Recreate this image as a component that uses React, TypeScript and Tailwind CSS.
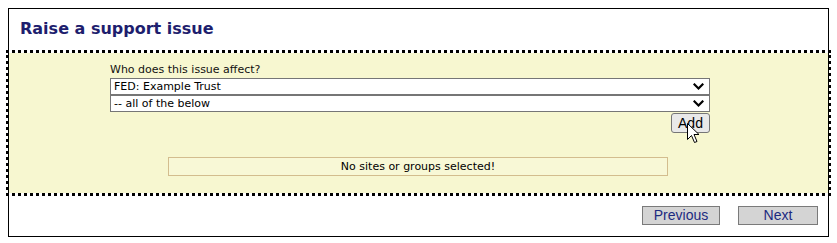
import React from "react";

function Chevron() {
  return (
    <svg width="11" height="8" viewBox="0 0 11 8" className="shrink-0">
      <path d="M1.5 1.5 L5.5 5.5 L9.5 1.5" fill="none" stroke="#000" strokeWidth="2.2" strokeLinecap="square" />
    </svg>
  );
}

function FakeSelect({ text }: { text: string }) {
  return (
    <div
      className="flex h-[17px] w-[600px] items-center justify-between border border-[#767676] bg-white pl-[3px] pr-[5px] leading-none text-black"
      style={{ fontFamily: "'DejaVu Sans', Verdana, sans-serif" }}
    >
      <span className="text-[11px]">{text}</span>
      <Chevron />
    </div>
  );
}

export default function App() {
  return (
    <div className="bg-white p-2" style={{ fontFamily: "'DejaVu Sans', Verdana, sans-serif" }}>
      <div className="flex h-[229px] flex-col border border-black">
        <div className="h-[44px] shrink-0 pl-[11px] pt-[10px]">
          <h1 className="text-[16px] font-bold leading-[20px] text-[#1e1e6e]">Raise a support issue</h1>
        </div>
        <div className="relative h-[140px] shrink-0 bg-[#f7f7d0] outline-3 outline-dotted outline-black">
          <div className="ml-[101px] w-[600px] pt-[9px]">
            <div className="h-[16px] text-[11px] leading-[16px] text-[#111]">Who does this issue affect?</div>
            <div>
              <FakeSelect text="FED: Example Trust" />
              <FakeSelect text="-- all of the below" />
            </div>
            <div className="mt-[1px] flex justify-end">
              <button
                className="flex h-[20px] w-[39px] items-center justify-center rounded-[3px] border border-[#767676] bg-[#e9e9e9] text-[14px] leading-none text-black"
                style={{ fontFamily: "'Liberation Sans', Arial, sans-serif" }}
              >
                Add
              </button>
            </div>
          </div>
          <div className="ml-[159px] mt-[24px] flex h-[19px] w-[500px] items-center justify-center border border-[#d3bd8e] bg-[#f8f8d6] text-[11px] leading-none text-black">
            No sites or groups selected!
          </div>
          <svg
            className="absolute left-[678px] top-[70px]"
            width="13"
            height="21"
            viewBox="0 0 13 21"
          >
            <path
              d="M0.5 0.5 L0.5 16.5 L4.5 12.5 L7.5 19.5 L10 18.5 L7 11.5 L12 11.5 Z"
              fill="#fff"
              stroke="#000"
              strokeWidth="1"
              strokeLinejoin="miter"
            />
          </svg>
        </div>
        <div className="flex flex-1 items-center justify-end gap-[18px] pr-[10px] pt-[1px]">
          <button
            className="h-[19px] w-[78px] border border-[#7a7a7a] bg-[#d4d4d4] text-[14px] leading-none text-[#1c2a80]"
            style={{ fontFamily: "'Liberation Sans', Arial, sans-serif" }}
          >
            Previous
          </button>
          <button
            className="h-[19px] w-[80px] border border-[#7a7a7a] bg-[#d4d4d4] text-[14px] leading-none text-[#1c2a80]"
            style={{ fontFamily: "'Liberation Sans', Arial, sans-serif" }}
          >
            Next
          </button>
        </div>
      </div>
    </div>
  );
}
